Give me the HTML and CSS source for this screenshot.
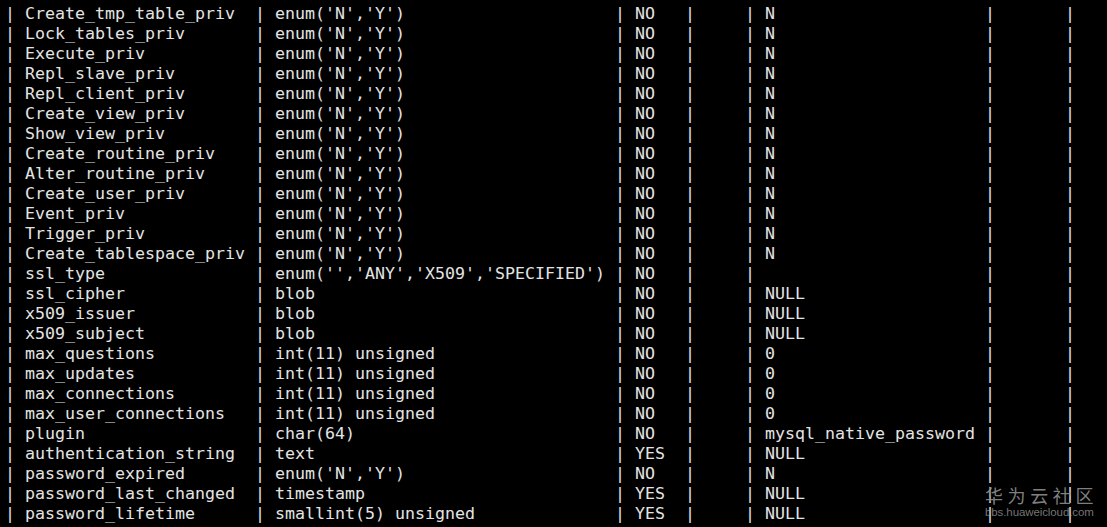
FILE: index.html
```html
<!DOCTYPE html>
<html>
<head>
<meta charset="utf-8">
<link rel="stylesheet" href="styles.css">
</head>
<body>
<div class="term">
<div class="out">
<div class="row">| <span class="f">Create_tmp_table_priv</span> | <span class="t">enum('N','Y')</span> | <span class="n">NO</span> |     | <span class="d">N</span> |       |</div>
<div class="row">| <span class="f">Lock_tables_priv</span> | <span class="t">enum('N','Y')</span> | <span class="n">NO</span> |     | <span class="d">N</span> |       |</div>
<div class="row">| <span class="f">Execute_priv</span> | <span class="t">enum('N','Y')</span> | <span class="n">NO</span> |     | <span class="d">N</span> |       |</div>
<div class="row">| <span class="f">Repl_slave_priv</span> | <span class="t">enum('N','Y')</span> | <span class="n">NO</span> |     | <span class="d">N</span> |       |</div>
<div class="row">| <span class="f">Repl_client_priv</span> | <span class="t">enum('N','Y')</span> | <span class="n">NO</span> |     | <span class="d">N</span> |       |</div>
<div class="row">| <span class="f">Create_view_priv</span> | <span class="t">enum('N','Y')</span> | <span class="n">NO</span> |     | <span class="d">N</span> |       |</div>
<div class="row">| <span class="f">Show_view_priv</span> | <span class="t">enum('N','Y')</span> | <span class="n">NO</span> |     | <span class="d">N</span> |       |</div>
<div class="row">| <span class="f">Create_routine_priv</span> | <span class="t">enum('N','Y')</span> | <span class="n">NO</span> |     | <span class="d">N</span> |       |</div>
<div class="row">| <span class="f">Alter_routine_priv</span> | <span class="t">enum('N','Y')</span> | <span class="n">NO</span> |     | <span class="d">N</span> |       |</div>
<div class="row">| <span class="f">Create_user_priv</span> | <span class="t">enum('N','Y')</span> | <span class="n">NO</span> |     | <span class="d">N</span> |       |</div>
<div class="row">| <span class="f">Event_priv</span> | <span class="t">enum('N','Y')</span> | <span class="n">NO</span> |     | <span class="d">N</span> |       |</div>
<div class="row">| <span class="f">Trigger_priv</span> | <span class="t">enum('N','Y')</span> | <span class="n">NO</span> |     | <span class="d">N</span> |       |</div>
<div class="row">| <span class="f">Create_tablespace_priv</span> | <span class="t">enum('N','Y')</span> | <span class="n">NO</span> |     | <span class="d">N</span> |       |</div>
<div class="row">| <span class="f">ssl_type</span> | <span class="t">enum('','ANY','X509','SPECIFIED')</span> | <span class="n">NO</span> |     | <span class="d"></span> |       |</div>
<div class="row">| <span class="f">ssl_cipher</span> | <span class="t">blob</span> | <span class="n">NO</span> |     | <span class="d">NULL</span> |       |</div>
<div class="row">| <span class="f">x509_issuer</span> | <span class="t">blob</span> | <span class="n">NO</span> |     | <span class="d">NULL</span> |       |</div>
<div class="row">| <span class="f">x509_subject</span> | <span class="t">blob</span> | <span class="n">NO</span> |     | <span class="d">NULL</span> |       |</div>
<div class="row">| <span class="f">max_questions</span> | <span class="t">int(11) unsigned</span> | <span class="n">NO</span> |     | <span class="d">0</span> |       |</div>
<div class="row">| <span class="f">max_updates</span> | <span class="t">int(11) unsigned</span> | <span class="n">NO</span> |     | <span class="d">0</span> |       |</div>
<div class="row">| <span class="f">max_connections</span> | <span class="t">int(11) unsigned</span> | <span class="n">NO</span> |     | <span class="d">0</span> |       |</div>
<div class="row">| <span class="f">max_user_connections</span> | <span class="t">int(11) unsigned</span> | <span class="n">NO</span> |     | <span class="d">0</span> |       |</div>
<div class="row">| <span class="f">plugin</span> | <span class="t">char(64)</span> | <span class="n">NO</span> |     | <span class="d">mysql_native_password</span> |       |</div>
<div class="row">| <span class="f">authentication_string</span> | <span class="t">text</span> | <span class="n">YES</span> |     | <span class="d">NULL</span> |       |</div>
<div class="row">| <span class="f">password_expired</span> | <span class="t">enum('N','Y')</span> | <span class="n">NO</span> |     | <span class="d">N</span> |       |</div>
<div class="row">| <span class="f">password_last_changed</span> | <span class="t">timestamp</span> | <span class="n">YES</span> |     | <span class="d">NULL</span> |       |</div>
<div class="row">| <span class="f">password_lifetime</span> | <span class="t">smallint(5) unsigned</span> | <span class="n">YES</span> |     | <span class="d">NULL</span> |       |</div>
</div>
<div class="watermark">
<div class="wm-cn">华为云社区</div>
<div class="wm-url">bbs.huaweicloud.com</div>
</div>
</div>
</body>
</html>
```

FILE: styles.css
```css
html, body {
  margin: 0;
  padding: 0;
  background: #000;
}

.term {
  position: relative;
  width: 1107px;
  height: 527px;
  background: #000;
  overflow: hidden;
}

.out {
  display: flex;
  flex-direction: column;
  padding: 4px 0 0 5px;
  font-family: "DejaVu Sans Mono", monospace;
  font-size: 16.61px;
  line-height: 20px;
  color: #e4e4e4;
}

.row {
  white-space: pre;
  height: 20px;
}

.row span {
  display: inline-block;
  vertical-align: top;
}

.f { width: 22ch; }
.t { width: 33ch; }
.n { width: 4ch; }
.d { width: 21ch; }

.watermark {
  position: absolute;
  left: 985px;
  top: 484px;
  display: flex;
  flex-direction: column;
  align-items: flex-start;
}

.wm-cn {
  font-family: "Noto Sans CJK SC", sans-serif;
  font-size: 18px;
  line-height: 22px;
  letter-spacing: 4.6px;
  color: rgba(170, 170, 170, 0.75);
  text-shadow: 0 0 2px rgba(0, 0, 0, 0.8);
}

.wm-url {
  font-family: "Liberation Sans", Arial, sans-serif;
  font-size: 11.5px;
  line-height: 13px;
  color: rgba(170, 170, 170, 0.7);
  letter-spacing: -0.1px;
}
```
